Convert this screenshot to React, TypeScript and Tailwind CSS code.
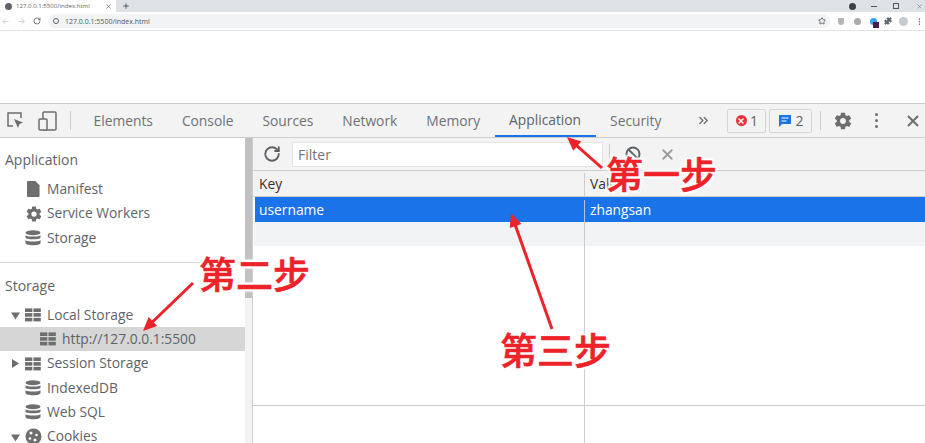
import { ChevronsRight, Ellipsis, Plus, Puzzle, RotateCw, Star, X, ArrowLeft, ArrowRight } from "lucide-react"

const font = { fontFamily: '"Open Sans", sans-serif' }

const DocIcon = () => (
  <svg width="13" height="16" viewBox="0 0 14 17" fill="#6e6e6e"><path d="M1 0h8l4.500 4.500V16a1 1 0 0 1-1 1H1a1 1 0 0 1-1-1V1a1 1 0 0 1 1-1z" /></svg>
)

const GearIcon = ({ size = 18, color = "#6e6e6e" }: { size?: number; color?: string }) => (
  <svg width={size} height={size} viewBox="0 0 24 24" fill={color}>
    <path d="M19.400 13c.04-.33.06-.66.06-1s-.02-.67-.06-1l2.100-1.650c.2-.15.25-.42.12-.64l-2-3.460c-.12-.22-.39-.3-.61-.22l-2.490 1c-.52-.4-1.080-.73-1.690-.98l-.38-2.650A.5.5 0 0 0 14 2h-4a.5.5 0 0 0-.49.42l-.38 2.650c-.61.25-1.170.59-1.690.98l-2.490-1c-.23-.09-.49 0-.61.22l-2 3.460c-.13.22-.07.49.12.64L4.570 11c-.04.33-.07.67-.07 1s.03.67.07 1l-2.110 1.650c-.19.15-.25.42-.12.64l2 3.460c.12.22.39.3.61.22l2.490-1c.52.4 1.080.73 1.690.98l.38 2.650c.03.24.24.42.49.42h4c.25 0 .46-.18.49-.42l.38-2.650c.61-.25 1.170-.59 1.690-.98l2.490 1c.23.09.49 0 .61-.22l2-3.460c.12-.22.07-.49-.12-.64L19.400 13zM12 15.500a3.500 3.500 0 1 1 0-7 3.500 3.500 0 0 1 0 7z" />
  </svg>
)

const DbIcon = () => (
  <svg width="16" height="16" viewBox="0 0 16 16" fill="#6e6e6e">
    <ellipse cx="8" cy="2.800" rx="7.500" ry="2.500" />
    <path d="M.5 5.200C1.500 7 14.500 7 15.500 5.200v2.600C14.500 9.800 1.500 9.800.5 7.800z" />
    <path d="M.5 10C1.500 12 14.500 12 15.500 10v3c0 3-15 3-15 0z" />
  </svg>
)

const GridIcon = () => (
  <svg width="16" height="14" viewBox="0 0 17 14" fill="#6e6e6e">
    <rect x="0" y="0" width="7.800" height="3.800" /><rect x="9" y="0" width="7.800" height="3.800" />
    <rect x="0" y="5" width="7.800" height="3.800" /><rect x="9" y="5" width="7.800" height="3.800" />
    <rect x="0" y="10" width="7.800" height="3.800" /><rect x="9" y="10" width="7.800" height="3.800" />
  </svg>
)

const CookieIcon = () => (
  <svg width="17" height="17" viewBox="0 0 17 17">
    <circle cx="8.500" cy="8.500" r="8" fill="#6e6e6e" />
    <circle cx="6" cy="5" r="1.500" fill="#fff" /><circle cx="11.500" cy="7" r="1.300" fill="#fff" />
    <circle cx="5" cy="10.500" r="1.300" fill="#fff" /><circle cx="10" cy="12" r="1.500" fill="#fff" />
  </svg>
)

const Tri = ({ open }: { open?: boolean }) => (
  <svg width="9" height="9" viewBox="0 0 9 9" fill="#6e6e6e">
    {open ? <path d="M0 1.500h9L4.500 8.500z" /> : <path d="M1 0l7 4.500L1 9z" />}
  </svg>
)

function SideRow({ icon, label, arrow, pad = "pl-[25px]", selected }: { icon: React.ReactNode; label: string; arrow?: "open" | "closed"; pad?: string; selected?: boolean }) {
  return (
    <div className={`relative flex h-[24.400px] shrink-0 items-center ${pad} ${selected ? "bg-[#d6d6d6]" : ""}`}>
      {arrow && <span className="absolute left-[11px] top-[8px] flex"><Tri open={arrow === "open"} /></span>}
      <span className="flex w-[22px] shrink-0 items-center">{icon}</span>
      <span className="text-[13.800px] text-[#5f6368]">{label}</span>
    </div>
  )
}

function Tab({ label, active }: { label: string; active?: boolean }) {
  return (
    <div className={`flex h-full items-center px-[14.500px] pt-[2px] text-[13.800px] ${active ? "border-b-2 border-[#1a73e8] text-[#5f6368]" : "text-[#6e7276]"}`}>
      {label}
    </div>
  )
}

function Arrow({ x1, y1, x2, y2 }: { x1: number; y1: number; x2: number; y2: number }) {
  const a = Math.atan2(y2 - y1, x2 - x1)
  const l = 15
  const s = 0.42
  const p1 = `${x2 - l * Math.cos(a - s)},${y2 - l * Math.sin(a - s)}`
  const p2 = `${x2 - l * Math.cos(a + s)},${y2 - l * Math.sin(a + s)}`
  return (
    <>
      <line x1={x1} y1={y1} x2={x2 - 8 * Math.cos(a)} y2={y2 - 8 * Math.sin(a)} stroke="#ee2229" strokeWidth="3" />
      <polygon points={`${x2},${y2} ${p1} ${p2}`} fill="#ee2229" />
    </>
  )
}

function Step({ text, className }: { text: string; className: string }) {
  return (
    <div
      className={`absolute text-[37px] leading-none font-medium text-[#ee2229] ${className}`}
      style={{
        fontFamily: '"Noto Sans CJK SC", sans-serif',
        WebkitTextStroke: "0.6px #ee2229",
        textShadow: "2px 0 2px #fff, -2px 0 2px #fff, 0 2px 2px #fff, 0 -2px 2px #fff, 2px 2px 2px #fff, -2px -2px 2px #fff, 2px -2px 2px #fff, -2px 2px 2px #fff",
      }}
    >
      {text}
    </div>
  )
}

export default function App() {
  return (
    <div className="relative flex h-[443px] w-[925px] flex-col overflow-hidden bg-white" style={font}>
      {/* browser chrome */}
      <div className="flex h-[12px] shrink-0 items-center bg-[#dee1e6]">
        <div className="flex h-full w-[116px] items-center bg-white pl-[5px]">
          <span className="h-[7px] w-[7px] rounded-full bg-[#5f6368]" />
          <span className="ml-[4px] text-[6.100px] leading-none text-[#666]">127.0.0.1:5500/index.html</span>
          <X className="ml-auto mr-[4px]" size={7} color="#444" />
        </div>
        <Plus className="ml-[6px]" size={8} color="#444" strokeWidth={2.500} />
        <span className="ml-auto mr-[15.500px] h-[7px] w-[7px] rounded-full bg-[#3c4043]" />
        <span className="mr-[16px] h-px w-[6px] bg-[#555]" />
        <span className="mr-[16.500px] h-[6px] w-[6px] border border-[#555]" />
        <X className="mr-[2.500px]" size={7} color="#777" />
      </div>
      <div className="flex h-[19px] shrink-0 items-center border-b border-[#e3e3e3] bg-white">
        <ArrowLeft className="ml-[1px]" size={9} color="#c4c6c9" />
        <ArrowRight className="ml-[7px]" size={9} color="#c4c6c9" />
        <RotateCw className="ml-[7px]" size={8} color="#5f6368" strokeWidth={2.500} />
        <div className="ml-[7px] flex h-[14px] w-[782px] items-center rounded-full bg-[#f1f3f4] pl-[5px]">
          <span className="h-[6px] w-[6px] rounded-full border border-[#5f6368]" />
          <span className="ml-[6px] text-[7px] leading-none text-[#555]">127.0.0.1:5500/index.html</span>
          <Star className="ml-auto mr-[4px]" size={8} color="#555" strokeWidth={2.500} />
        </div>
        <span className="ml-[8px] h-[7px] w-[6px] rounded-b-full bg-[#b5b5b5]" />
        <span className="ml-[9.500px] h-[7px] w-[7px] rounded-full bg-[#aaa]" />
        <span className="relative ml-[9px] h-[7px] w-[7px] rounded-full bg-[#38a0ee]">
          <span className="absolute left-[3px] top-[4px] h-[6px] w-[6px] bg-[#4a1a4a]" />
        </span>
        <Puzzle className="ml-[7.500px]" size={8} color="#5f6368" fill="#5f6368" />
        <span className="ml-[6.500px] h-[9px] w-[9px] rounded-full bg-[#c6cad0]" />
        <Ellipsis className="ml-[7px] rotate-90" size={9} color="#5f6368" />
      </div>

      {/* page */}
      <div className="h-[72px] shrink-0 bg-white" />

      {/* devtools toolbar */}
      <div className="flex h-[35px] shrink-0 items-center border-y border-[#cdcdcd] bg-[#f3f3f3]">
        <div className="flex w-[79px] shrink-0 items-center pl-[6px]">
          <svg width="19" height="19" viewBox="0 0 19 19" fill="none" stroke="#6e6e6e" strokeWidth="1.500">
            <path d="M7 15H2V2h13v5" />
            <path d="M8 8l9 3.500-3.500 1.500L12 17z" fill="#6e6e6e" stroke="none" />
          </svg>
          <svg className="ml-[13px]" width="19" height="20" viewBox="0 0 19 20" fill="none" stroke="#6e6e6e" strokeWidth="1.500">
            <rect x="5" y="1" width="13" height="18" rx="1" />
            <rect x="1" y="8" width="8" height="11" rx="1" fill="#f3f3f3" />
          </svg>
          <span className="ml-[13px] h-[19px] w-px bg-[#ccc]" />
        </div>
        <div className="flex h-full items-center">
          <Tab label="Elements" />
          <Tab label="Console" />
          <Tab label="Sources" />
          <Tab label="Network" />
          <Tab label="Memory" />
          <Tab label="Application" active />
          <Tab label="Security" />
        </div>
        <ChevronsRight className="ml-[20.500px]" size={15} color="#5f6368" />
        <div className="ml-[16px] flex h-[24px] w-[39px] items-center justify-center gap-[3px] rounded-[2px] border border-[#d5d5d5] text-[14px] text-[#5f6368]">
          <span className="flex h-[11px] w-[11px] items-center justify-center rounded-full bg-[#e8303c]"><X size={8} color="#fff" strokeWidth={4} /></span>
          1
        </div>
        <div className="ml-[3px] flex h-[24px] w-[43px] items-center justify-center gap-[3px] rounded-[2px] border border-[#d5d5d5] text-[14px] text-[#5f6368]">
          <svg width="14" height="14" viewBox="0 0 14 14" fill="#1a73e8"><path d="M1 1h12v9H4l-3 3z" /><path d="M3.500 4h7M3.500 7h5" stroke="#fff" strokeWidth="1.200" /></svg>
          2
        </div>
        <span className="ml-[8px] h-[19px] w-px bg-[#ccc]" />
        <span className="ml-[12px] flex"><GearIcon size={20} /></span>
        <span className="ml-[22px] flex flex-col gap-[3px]">
          <span className="h-[3px] w-[3px] rounded-full bg-[#6e6e6e]" />
          <span className="h-[3px] w-[3px] rounded-full bg-[#6e6e6e]" />
          <span className="h-[3px] w-[3px] rounded-full bg-[#6e6e6e]" />
        </span>
        <X className="ml-[25.500px]" size={18} color="#6e6e6e" strokeWidth={2.500} />
      </div>

      {/* devtools body */}
      <div className="flex min-h-0 flex-1">
        <aside className="flex w-[245px] shrink-0 flex-col overflow-hidden bg-white">
          <div className="flex h-[39px] shrink-0 items-center pl-[5px] pt-[3px] text-[14px] text-[#5f6368]">Application</div>
          <SideRow icon={<span className="ml-[2px] flex"><DocIcon /></span>} label="Manifest" />
          <SideRow icon={<GearIcon />} label="Service Workers" />
          <SideRow icon={<DbIcon />} label="Storage" />
          <div className="mt-[12px] h-px shrink-0 bg-[#d8d8d8]" />
          <div className="flex h-[47px] shrink-0 items-center pb-[2px] pl-[5px] text-[14px] text-[#5f6368]">Storage</div>
          <div className="-mt-[7.500px]">
            <SideRow icon={<GridIcon />} label="Local Storage" arrow="open" />
            <SideRow icon={<GridIcon />} label="http://127.0.0.1:5500" pad="pl-[40px]" selected />
            <SideRow icon={<GridIcon />} label="Session Storage" arrow="closed" />
            <SideRow icon={<DbIcon />} label="IndexedDB" />
            <SideRow icon={<DbIcon />} label="Web SQL" />
            <SideRow icon={<CookieIcon />} label="Cookies" arrow="open" />
          </div>
        </aside>

        <div className="flex w-[8px] shrink-0 flex-col border-r border-[#ccc] bg-[#f3f3f3]">
          <div className="h-[160px] w-[7px] bg-[#c1c1c1]" />
        </div>

        <main className="flex min-w-0 flex-1 flex-col">
          <div className="flex h-[33px] shrink-0 items-center border-b border-[#cdcdcd] bg-[#f3f3f3]">
            <RotateCw className="ml-[10px]" size={18} color="#5f6368" strokeWidth={2.500} />
            <div className="ml-[11px] flex h-[25px] w-[311px] items-center border border-[#e3e3e3] bg-white pl-[5px] text-[14px] text-[#757575]">Filter</div>
            <span className="ml-[6px] h-[20px] w-px bg-[#ccc]" />
            <svg className="ml-[15px]" width="16" height="16" viewBox="0 0 16 16" fill="none" stroke="#5f6368" strokeWidth="2">
              <circle cx="8" cy="8" r="6.500" /><path d="M3.500 3.500l9 9" />
            </svg>
            <X className="ml-[17.500px]" size={17} color="#9a9a9a" strokeWidth={2.500} />
          </div>
          <div className="grid h-[26px] shrink-0 grid-cols-[332px_1fr] border-b border-[#cdcdcd] bg-[#f3f3f3] pt-[2px] text-[13.800px] text-[#333]">
            <div className="flex items-center border-r border-[#cdcdcd] pl-[6px]">Key</div>
            <div className="flex items-center pl-[5px]">Value</div>
          </div>
          <div className="ml-[2px] grid h-[24.500px] shrink-0 grid-cols-[330px_1fr] bg-[#1a73e8] pt-[3px] text-[13.800px] text-white">
            <div className="flex items-center border-r border-[#b0c4e4] pl-[4px]">username</div>
            <div className="flex items-center pl-[5px]">zhangsan</div>
          </div>
          <div className="ml-[1px] grid h-[24px] shrink-0 grid-cols-[331px_1fr] bg-[#f1f3f4]">
            <div className="border-r border-[#cdcdcd]" />
          </div>
          <div className="grid h-[160px] shrink-0 grid-cols-[332px_1fr] border-b border-[#cdcdcd] bg-white">
            <div className="border-r border-[#cdcdcd]" />
          </div>
          <div className="grid flex-1 grid-cols-[332px_1fr] bg-white">
            <div className="border-r border-[#cdcdcd]" />
          </div>
        </main>
      </div>

      {/* hand-drawn annotations over the screenshot */}
      <svg className="absolute left-0 top-0" width="925" height="443">
        <Arrow x1={602} y1={168} x2={567} y2={137} />
        <Arrow x1={193} y1={283} x2={143} y2={331} />
        <Arrow x1={552} y1={329} x2={511} y2={213} />
      </svg>
      <Step text="第一步" className="left-[606px] top-[155px]" />
      <Step text="第二步" className="left-[199px] top-[255px]" />
      <Step text="第三步" className="left-[500px] top-[331px]" />
    </div>
  )
}
